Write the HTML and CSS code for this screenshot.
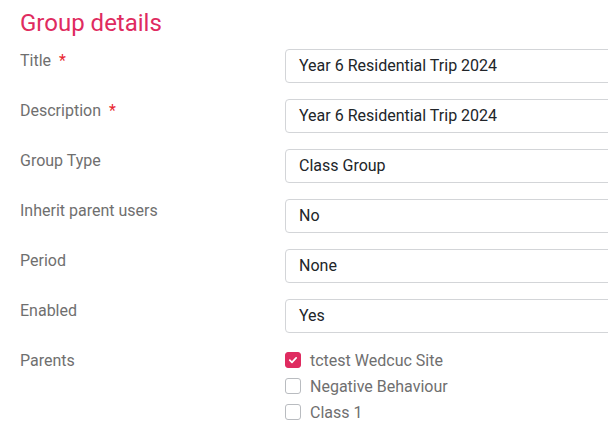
FILE: index.html
```html
<!DOCTYPE html>
<html>
<head>
<meta charset="utf-8">
<link rel="stylesheet" href="styles.css">
</head>
<body>
<div class="page">
  <h1 class="title">Group details</h1>
  <div class="form">
    <div class="label">Title <span class="req">*</span></div>
    <div class="field"><div class="input">Year 6 Residential Trip 2024</div></div>

    <div class="label">Description <span class="req">*</span></div>
    <div class="field"><div class="input">Year 6 Residential Trip 2024</div></div>

    <div class="label">Group Type</div>
    <div class="field"><div class="input">Class Group</div></div>

    <div class="label">Inherit parent users</div>
    <div class="field"><div class="input">No</div></div>

    <div class="label">Period</div>
    <div class="field"><div class="input">None</div></div>

    <div class="label">Enabled</div>
    <div class="field"><div class="input">Yes</div></div>

    <div class="label">Parents</div>
    <div class="field checks">
      <div class="check"><span class="box checked"><svg viewBox="0 0 16 16" width="16" height="16"><path d="M4.3 8.2 L6.8 10.6 L11.6 5.6" fill="none" stroke="#fff" stroke-width="2" stroke-linecap="round" stroke-linejoin="round"/></svg></span><span>tctest Wedcuc Site</span></div>
      <div class="check"><span class="box"></span><span>Negative Behaviour</span></div>
      <div class="check"><span class="box"></span><span>Class 1</span></div>
    </div>
  </div>
</div>
</body>
</html>
```

FILE: styles.css
```css
html, body {
  margin: 0;
  padding: 0;
  background: #fff;
  overflow: hidden;
}
body {
  font-family: Roboto, "Noto Sans", sans-serif;
  width: 608px;
  height: 421px;
}
.page {
  padding: 7px 0 0 20px;
}
.title {
  margin: 0;
  font-size: 24px;
  line-height: 32px;
  font-weight: 400;
  color: #df2b60;
}
.form {
  margin-top: 10px;
  display: grid;
  grid-template-columns: 265px 340px;
  row-gap: 16px;
}
.label {
  font-size: 16px;
  line-height: 24px;
  color: #6f6f6f;
}
.req {
  color: #e8262f;
  margin-left: 4px;
}
.input {
  box-sizing: border-box;
  height: 34px;
  border: 1px solid #d3d5d8;
  border-radius: 4px;
  padding: 0 13px;
  font-size: 16px;
  line-height: 32px;
  color: #212529;
  width: 340px;
}
.checks {
  display: flex;
  flex-direction: column;
}
.check {
  display: flex;
  align-items: center;
  height: 22px;
  margin-bottom: 4px;
  font-size: 16px;
  color: #6f6f6f;
}
.box {
  box-sizing: border-box;
  width: 16px;
  height: 16px;
  border: 1px solid #b9bcc0;
  border-radius: 3px;
  margin-right: 9px;
  display: flex;
  align-items: center;
  justify-content: center;
}
.box.checked {
  background: #df2b60;
  border-color: #df2b60;
}
.box svg {
  display: block;
}
```
